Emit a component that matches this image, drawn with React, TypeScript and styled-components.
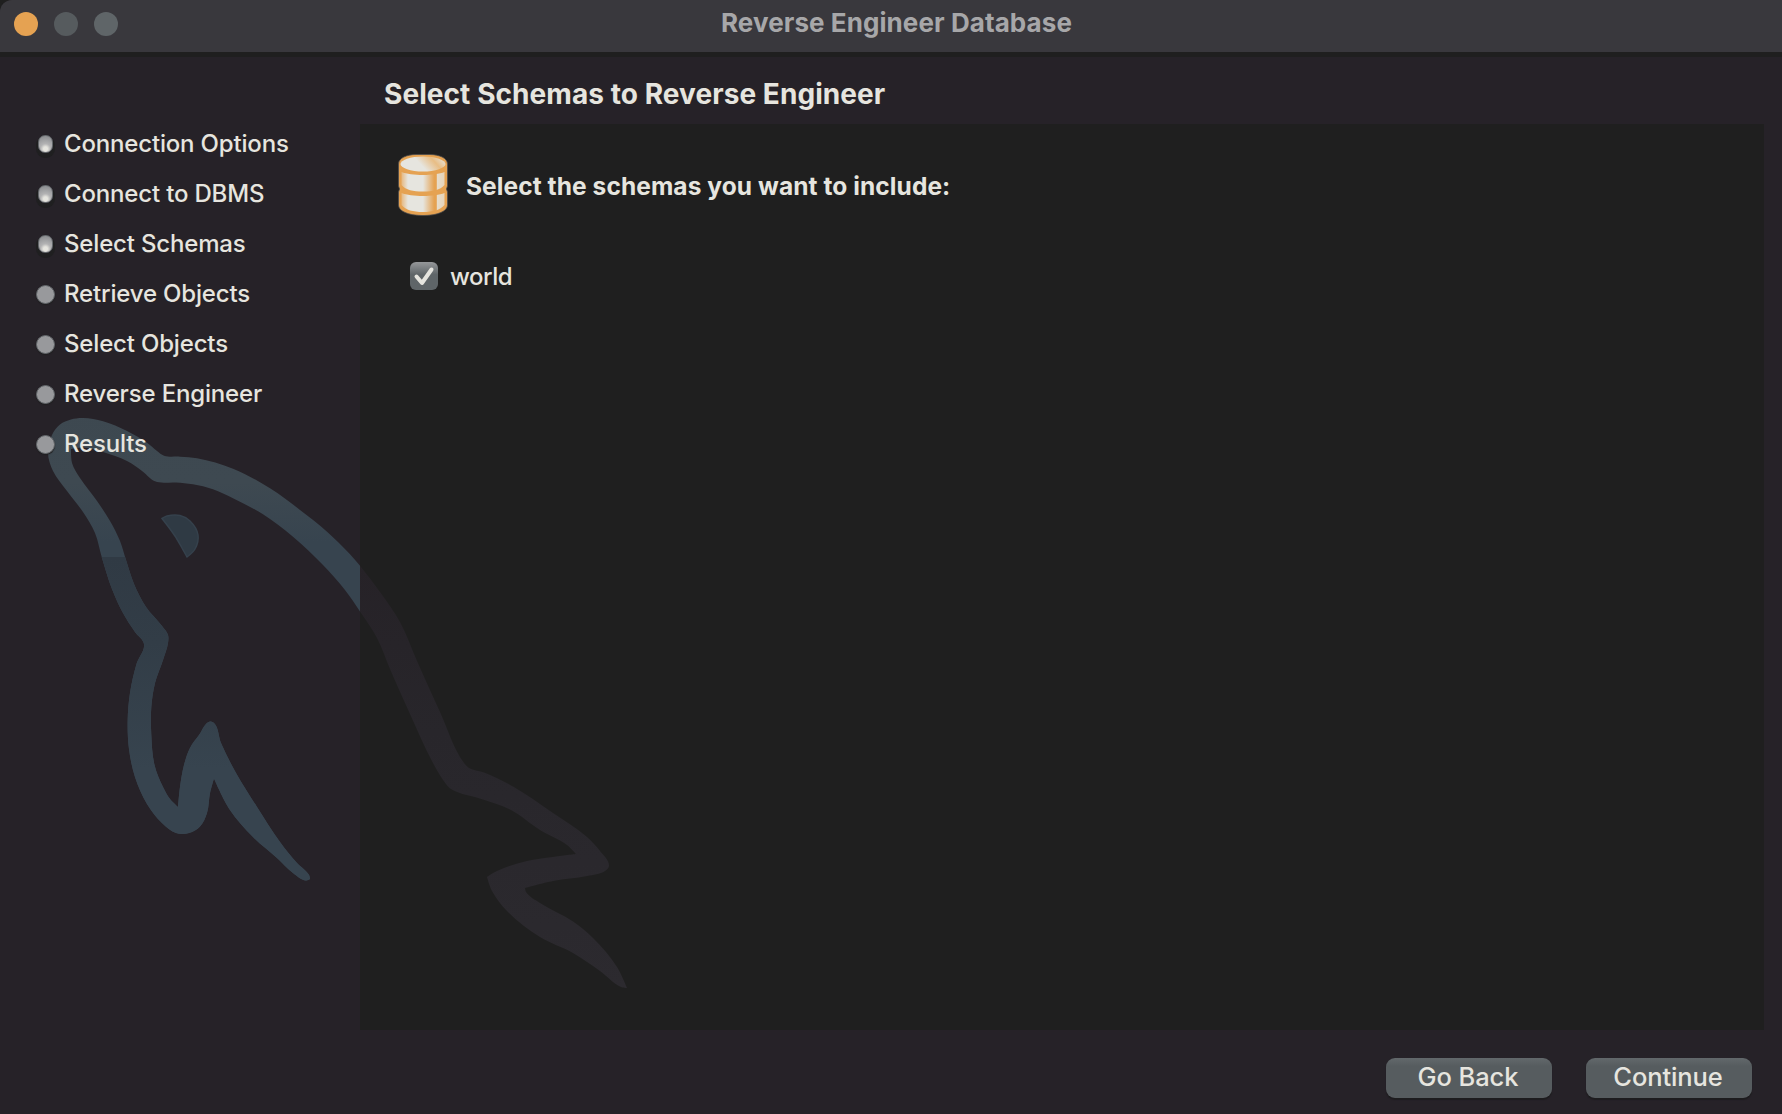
import React from "react";
import styled, { createGlobalStyle } from "styled-components";

const GlobalStyle = createGlobalStyle`
  * { box-sizing: border-box; }
  html, body { margin: 0; padding: 0; background: #1f1f1f; overflow: hidden; }
`;

const Window = styled.div`
  position: relative;
  display: flex;
  flex-direction: column;
  width: 1782px;
  height: 1114px;
  overflow: hidden;
  background: #262228;
  border-top-left-radius: 12px;
  font-family: Inter, "Liberation Sans", sans-serif;
  font-size: 24px;
  font-weight: 450;
  color: #e6e5df;
`;

const TitleBar = styled.header`
  display: grid;
  grid-template-columns: 1fr auto 1fr;
  align-items: center;
  height: 57px;
  padding: 0 14px 6px;
  background: #39383d;
  border-bottom: 5px solid #1f1f1f;
`;

const Lights = styled.div`
  display: flex;
  gap: 16px;
  padding-top: 1px;
`;

const Light = styled.span<{ $color: string }>`
  width: 24px;
  height: 24px;
  border-radius: 50%;
  background: ${(p) => p.$color};
`;

const WindowTitle = styled.h1`
  margin: 0 -11px 0 0;
  font-size: 26px;
  line-height: 32px;
  font-weight: 700;
  letter-spacing: 0.08px;
  color: #a7a7a9;
`;

const Body = styled.div`
  display: grid;
  grid-template-columns: 360px 1404px;
  height: 973px;
`;

const Steps = styled.ul`
  position: relative;
  z-index: 2;
  list-style: none;
  margin: 0;
  padding: 62px 0 0 35px;
`;

const Step = styled.li`
  display: flex;
  align-items: center;
  gap: 10px;
  height: 50px;
  line-height: 30px;
  letter-spacing: -0.17px;
  white-space: nowrap;
`;

const Bullet = styled.span<{ $done: boolean }>`
  flex: none;
  width: ${(p) => (p.$done ? 15 : 19)}px;
  height: ${(p) => (p.$done ? 18 : 19)}px;
  margin: ${(p) => (p.$done ? "0 1.500px 0 2.500px" : "1px -0.500px 0 0.500px")};
  border-radius: ${(p) => (p.$done ? "7px" : "50%")};
  border: 1px solid #62666a;
  background: ${(p) =>
    p.$done
      ? "radial-gradient(circle at 50% 80%, #e6e5df 0 2px, #b3b3b4 5px, #8b8d90 13px)"
      : "#98999c"};
  box-shadow: ${(p) => (p.$done ? "0 3px 0 2px #1f1f20" : "0 1px 1px #1f1f20")};
`;

const Content = styled.main`
  display: flex;
  flex-direction: column;
`;

const Heading = styled.h2`
  margin: 0;
  height: 67px;
  padding: 20px 0 0 24px;
  font-size: 28px;
  line-height: 35px;
  font-weight: 700;
  letter-spacing: 0.07px;
`;

const Panel = styled.section`
  flex: 1;
  padding: 30px 38px;
  background: #1f1f1f;
`;

const PanelHeader = styled.div`
  display: flex;
  align-items: center;
  gap: 18px;
  height: 62px;
`;

const PanelTitle = styled.h3`
  margin: 2px 0 0;
  font-size: 24.5px;
  line-height: 30px;
  font-weight: 700;
  letter-spacing: 0.08px;
`;

const Schema = styled.label`
  display: flex;
  align-items: center;
  gap: 12px;
  margin: 45px 0 0 12px;
  height: 30px;
  letter-spacing: -0.5px;
`;

const CheckBox = styled.span`
  display: flex;
  width: 28px;
  height: 28px;
  border-radius: 6px;
  background: linear-gradient(#96989a, #5f6568 45%);
`;

const Footer = styled.footer`
  display: flex;
  justify-content: flex-end;
  gap: 34px;
  padding: 28px 30px 0;
`;

const Button = styled.button`
  width: 166px;
  height: 40px;
  padding: 0 2px 2px 0;
  border: 0;
  border-radius: 9px;
  background: linear-gradient(#62686b, #565c5f 20%);
  box-shadow: 0 2px 1px #1d1c1e;
  color: #e6e5df;
  font: 450 25.5px/36px Inter, "Liberation Sans", sans-serif;
  letter-spacing: -0.1px;
`;

const Watermark = styled.svg`
  position: absolute;
  left: 0;
  top: 400px;
  z-index: 1;
  pointer-events: none;
`;

/* Closed curve through the given "x,y" points; sharp turns stay as corners. */
function smooth(points: string): string {
  const p = points.trim().split(/\s+/).map((s) => s.split(",").map(Number));
  const n = p.length;
  const unit = (from: number[], to: number[]) => {
    const dx = to[0] - from[0];
    const dy = to[1] - from[1];
    const len = Math.hypot(dx, dy) || 1;
    return [dx / len, dy / len];
  };
  const tangents = p.map((b, i) => {
    const a = p[(i + n - 1) % n];
    const c = p[(i + 1) % n];
    const into = unit(a, b);
    const out = unit(b, c);
    if (into[0] * out[0] + into[1] * out[1] < 0.2) return [0, 0];
    return unit([0, 0], [into[0] + out[0], into[1] + out[1]]);
  });
  let d = `M${p[0][0]} ${p[0][1]}`;
  for (let i = 0; i < n; i++) {
    const j = (i + 1) % n;
    const b = p[i];
    const c = p[j];
    const h = Math.hypot(c[0] - b[0], c[1] - b[1]) * 0.33;
    const s = tangents[i];
    const t = tangents[j];
    d += `C${b[0] + s[0] * h} ${b[1] + s[1] * h} ${c[0] - t[0] * h} ${c[1] - t[1] * h} ${c[0]} ${c[1]}`;
  }
  return d + "Z";
}

const HEAD = `48,453 52,435 60,424.500 71,419.500 83,418 103,421.300 127,431 147,442.700 157,451 164,455.700 180,456.700 197,458.300 233,468.700
270,488.300 300,510 327,531.700 350,554.300 361,567 380,592 377,638 361,613 345,590 323,565 293,536.700 263,514.300 233,498.300 213,489.300 193,484.300
176,482.500 155,481.300 143,471.700 127,461 103,452 83,447.500 71,449 72,463 80,478 97,501 110,521 120,541 126,560 134,584 146,607
162,626 168,635 168,643 163,660 155,683 151.300,707 151.300,735 154.500,765 163,787 170,799 178,807 180,787 184,765 190,748
199,735 210,721.500 214,723 221,743 236,773 257,807 280,842 297,863 309,875 310,879 306,880.500 293,873 277,858 253,837
230,810 214,778.500 210,793 207,813 200,826.500 189,833 176,833 162,823 147,804 135,777 129,749 127.700,720 130,693
136.500,664 144,644 135,632 123,613 112,589 102,558 95,533 83,512 67,491 53,471`;

const BACK = `350,554 361,567 380,592 400,622 417,661 440,712 464,763 470,768.500 484,772.500 513,786.500 553,813 587,837 600,851 609,866
605,871 587,876 553,881 525,888 526,892 540,903 573,921.500 593,938 617,967 627,988 621,987 600,971 573,953 540,937
507,911 492,891 487,877 497,871 527,861 553,857 576,854 567,845 540,830 511,810 483,799.500 451,789 446,784 433,763
410,714 390,669 377,638 361,613 345,590`;

const EYE = "162,518.500 167,516 180,515.500 190,521 198,535 195,549 187,557 182,548 175,536";

function Dolphin() {
  const head = smooth(HEAD);
  return (
    <Watermark width="660" height="600" viewBox="0 400 660 600">
      <defs>
        <linearGradient id="head" gradientUnits="userSpaceOnUse" x1="0" y1="400" x2="0" y2="550">
          <stop offset="0" stopColor="#3d4850" />
          <stop offset="0.55" stopColor="#3e4951" />
          <stop offset="0.95" stopColor="#37444f" />
        </linearGradient>
        <linearGradient id="jaw" gradientUnits="userSpaceOnUse" x1="0" y1="557" x2="0" y2="770">
          <stop offset="0" stopColor="#303a44" />
          <stop offset="0.4" stopColor="#323d47" />
          <stop offset="1" stopColor="#37444f" />
        </linearGradient>
        <linearGradient id="back" gradientUnits="userSpaceOnUse" x1="0" y1="560" x2="0" y2="990">
          <stop offset="0" stopColor="#262227" />
          <stop offset="0.4" stopColor="#28262b" />
          <stop offset="1" stopColor="#2c2a2f" />
        </linearGradient>
        <clipPath id="sidebar">
          <rect x="0" y="400" width="360" height="600" />
        </clipPath>
        <clipPath id="lower">
          <path d="M0 557H300V640H340V1000H0Z" />
        </clipPath>
        <clipPath id="panel">
          <rect x="360" y="400" width="300" height="600" />
        </clipPath>
      </defs>
      <path d={head} fill="url(#head)" clipPath="url(#sidebar)" />
      <path d={head} fill="url(#jaw)" clipPath="url(#lower)" />
      <path d={smooth(EYE)} fill="#2f3a44" stroke="#35414c" strokeWidth="1.500" />
      <path d={smooth(BACK)} fill="url(#back)" clipPath="url(#panel)" />
    </Watermark>
  );
}

function DatabaseIcon() {
  return (
    <svg width="50" height="62" viewBox="0 0 50 62">
      <defs>
        <linearGradient id="side" x1="0" x2="1">
          <stop offset="0" stopColor="#e6b880" />
          <stop offset="0.15" stopColor="#e6e5df" />
          <stop offset="0.5" stopColor="#e6e5df" />
          <stop offset="0.76" stopColor="#e5a252" />
          <stop offset="0.81" stopColor="#e5a252" />
          <stop offset="0.83" stopColor="#e6dccb" />
          <stop offset="1" stopColor="#e6d4b9" />
        </linearGradient>
        <linearGradient id="lid" x1="0" x2="1" y1="0.3" y2="0">
          <stop offset="0.35" stopColor="#e6e5df" />
          <stop offset="0.68" stopColor="#e8bd85" />
          <stop offset="0.95" stopColor="#e6e5df" />
        </linearGradient>
      </defs>
      <path
        d="M0.500 10C0.500 4 9 0.500 18 0.500H32C41 0.500 49.500 4 49.500 10V32L48.500 35L49.500 38V51C49.500 57 40 61.500 25 61.500S0.500 57 0.500 51V38L1.500 35L0.500 32Z"
        fill="#e5a252"
        stroke="#4b4b4d"
        strokeWidth="0.8"
      />
      <path d="M3.500 18C13 22 37 22 46.500 18V31C42 36 35 37.500 25 37.500S8 36 3.500 31Z" fill="url(#side)" />
      <path d="M3.500 39C13 43 37 43 46.500 39V51C42 56 35 58 25 58S8 56 3.500 51Z" fill="url(#side)" />
      <ellipse cx="25" cy="10" rx="22.500" ry="7.500" fill="url(#lid)" />
    </svg>
  );
}

const STEPS = [
  { label: "Connection Options", done: true },
  { label: "Connect to DBMS", done: true },
  { label: "Select Schemas", done: true },
  { label: "Retrieve Objects", done: false },
  { label: "Select Objects", done: false },
  { label: "Reverse Engineer", done: false },
  { label: "Results", done: false },
];

export default function App() {
  return (
    <>
      <GlobalStyle />
      <Window>
        <TitleBar>
          <Lights>
            <Light $color="#e5a252" />
            <Light $color="#565b5e" />
            <Light $color="#5f6568" />
          </Lights>
          <WindowTitle>Reverse Engineer Database</WindowTitle>
        </TitleBar>
        <Body>
          <Steps>
            {STEPS.map((step) => (
              <Step key={step.label}>
                <Bullet $done={step.done} />
                {step.label}
              </Step>
            ))}
          </Steps>
          <Content>
            <Heading>Select Schemas to Reverse Engineer</Heading>
            <Panel>
              <PanelHeader>
                <DatabaseIcon />
                <PanelTitle>Select the schemas you want to include:</PanelTitle>
              </PanelHeader>
              <Schema>
                <CheckBox>
                  <svg width="28" height="28" viewBox="0 0 28 28">
                    <path
                      d="M6.500 14.500L12 21L21.500 7.500"
                      fill="none"
                      stroke="#e6e5df"
                      strokeWidth="4"
                      strokeLinecap="round"
                      strokeLinejoin="round"
                    />
                  </svg>
                </CheckBox>
                world
              </Schema>
            </Panel>
          </Content>
        </Body>
        <Footer>
          <Button>Go Back</Button>
          <Button>Continue</Button>
        </Footer>
        <Dolphin />
      </Window>
    </>
  );
}
